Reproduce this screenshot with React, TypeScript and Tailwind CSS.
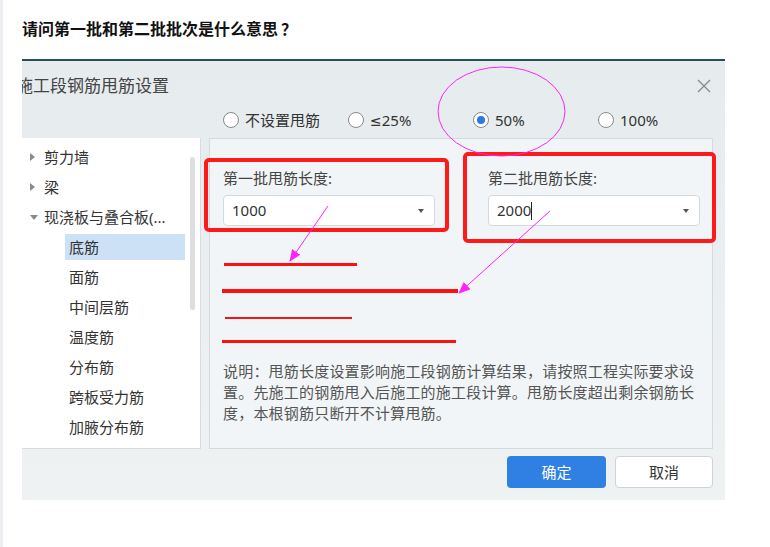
import React from 'react';

type TreeRow = { label: string; level: 0 | 1; arrow?: 'right' | 'down'; selected?: boolean };

const tree: TreeRow[] = [
  { label: '剪力墙', level: 0, arrow: 'right' },
  { label: '梁', level: 0, arrow: 'right' },
  { label: '现浇板与叠合板(...', level: 0, arrow: 'down' },
  { label: '底筋', level: 1, selected: true },
  { label: '面筋', level: 1 },
  { label: '中间层筋', level: 1 },
  { label: '温度筋', level: 1 },
  { label: '分布筋', level: 1 },
  { label: '跨板受力筋', level: 1 },
  { label: '加腋分布筋', level: 1 },
];

const radios = [
  { label: '不设置甩筋', checked: false },
  { label: '≤25%', checked: false },
  { label: '50%', checked: true },
  { label: '100%', checked: false },
];

const Radio: React.FC<{ label: string; checked: boolean }> = ({ label, checked }) => (
  <div className="w-[125px] flex items-center gap-[6px]">
    <span className="w-[16px] h-[16px] rounded-full bg-white border border-[#8a8a8a] flex items-center justify-center shrink-0">
      {checked && <span className="w-[8px] h-[8px] rounded-full bg-[#2a78e0]" />}
    </span>
    <span className="text-[15px] leading-[18px] text-[#333]">
      {label.startsWith('≤') ? (
        <>
          <span className="font-['DejaVu_Sans',sans-serif] text-[14px]">≤</span>
          {label.slice(1)}
        </>
      ) : (
        label
      )}
    </span>
  </div>
);

const Select: React.FC<{ value: string; cursor?: boolean }> = ({ value, cursor }) => (
  <div className="mt-[7px] h-[31px] bg-white border border-[#d6d9dc] rounded-[4px] flex items-center pl-[8px] pr-[10px]">
    <span className="text-[15px] text-[#333] leading-none">{value}</span>
    {cursor && <span className="w-[1px] h-[18px] bg-[#222]" />}
    <span className="ml-auto w-0 h-0 border-l-[3px] border-r-[3px] border-t-[4px] border-l-transparent border-r-transparent border-t-[#555]" />
  </div>
);

export default function App() {
  return (
    <div className="relative w-[770px] h-[547px] flex bg-white font-['Noto_Sans','Noto_Sans_CJK_SC',sans-serif]">
      <div className="w-[3px] bg-[#eceef1]" />
      <div className="flex-1">
        <div className="h-[59px] pl-[19px] pt-[17px]">
          <h1 className="text-[16px] leading-[22px] font-bold text-[#111] font-['Noto_Sans_CJK_SC',sans-serif]">
            请问第一批和第二批批次是什么意思<span className="ml-[3px]">？</span>
          </h1>
        </div>

        <div className="ml-[19px] w-[703px] h-[441px] overflow-hidden border-t-2 border-[#24505a] bg-gradient-to-b from-[#e6ebee] to-[#eef2f3]">
          {/* dialog title */}
          <div className="h-[50px] flex items-center pr-[14px]">
            <span className="-ml-[6px] text-[17px] text-[#444] whitespace-nowrap">施工段钢筋甩筋设置</span>
            <svg className="ml-auto" width="14" height="14" viewBox="0 0 14 14">
              <path d="M1 1 L13 13 M13 1 L1 13" stroke="#8a8a8a" strokeWidth="1.4" fill="none" />
            </svg>
          </div>

          {/* radio row */}
          <div className="h-[18px] pl-[201px] flex items-center">
            {radios.map(r => (
              <Radio key={r.label} label={r.label} checked={r.checked} />
            ))}
          </div>

          {/* panels */}
          <div className="mt-[9px] h-[311px] flex">
            <div className="w-[179px] bg-white border-r border-b border-[#d8dcdf] flex">
              <div className="w-[165px] pt-[4px]">
                {tree.map(row => (
                  <div key={row.label} className="h-[30px] flex items-center">
                    {row.level === 0 ? (
                      <div className="flex items-center">
                        <span className="w-[22px] pl-[8px] flex items-center">
                          {row.arrow === 'right' ? (
                            <span className="w-0 h-0 border-t-[4px] border-b-[4px] border-l-[5px] border-t-transparent border-b-transparent border-l-[#8a8a8a]" />
                          ) : (
                            <span className="w-0 h-0 border-l-[4px] border-r-[4px] border-t-[5px] border-l-transparent border-r-transparent border-t-[#8a8a8a]" />
                          )}
                        </span>
                        <span className="text-[15px] text-[#333] whitespace-nowrap">{row.label}</span>
                      </div>
                    ) : (
                      <div
                        className={`ml-[43px] w-[120px] h-[26px] flex items-center pl-[4px] text-[15px] text-[#333] ${
                          row.selected ? 'bg-[#cce0f6]' : ''
                        }`}
                      >
                        {row.label}
                      </div>
                    )}
                  </div>
                ))}
              </div>
              <div className="ml-[3px] mt-[19px] w-[5px] h-[153px] rounded-full bg-[#dcdee0]" />
            </div>

            <div className="ml-[8px] w-[504px] bg-[#f2f5f7] border border-[#d5dadd] pl-[13px]">
              <div className="pt-[29px] flex gap-[53px]">
                <div className="w-[212px]">
                  <div className="h-[20px] text-[15px] leading-[20px] text-[#444]">第一批甩筋长度:</div>
                  <Select value="1000" />
                </div>
                <div className="w-[212px]">
                  <div className="h-[20px] text-[15px] leading-[20px] text-[#444]">第二批甩筋长度:</div>
                  <Select value="2000" cursor />
                </div>
              </div>

              {/* hand-drawn red lines */}
              <div className="mt-[37px] ml-[1px] w-[133px] h-[3px] bg-[#ff1010]" />
              <div className="mt-[23px] -ml-[1px] w-[236px] h-[4px] bg-[#ff1010]" />
              <div className="mt-[24px] ml-[2px] w-[127px] h-[2px] bg-[#ff1010]" />
              <div className="mt-[21px] -ml-[1px] w-[234px] h-[3px] bg-[#ff1010]" />

              <p className="mt-[17px] text-[15px] leading-[21px] tracking-[0.2px] text-[#555] whitespace-nowrap font-['Noto_Sans_CJK_SC',sans-serif]">
                说明：甩筋长度设置影响施工段钢筋计算结果，请按照工程实际要求设
                <br />
                置。先施工的钢筋甩入后施工的施工段计算。甩筋长度超出剩余钢筋长
                <br />
                度，本根钢筋只断开不计算甩筋。
              </p>
            </div>
          </div>

          {/* buttons */}
          <div className="mt-[7px] h-[32px] flex justify-end gap-[9px] pr-[12px]">
            <button className="w-[99px] h-[32px] rounded-[4px] bg-[#2f80e2] text-white text-[15px]">确定</button>
            <button className="w-[98px] h-[32px] rounded-[4px] bg-white border border-[#cfd3d6] text-[#333] text-[15px]">取消</button>
          </div>
        </div>
      </div>

      {/* annotations drawn over the screenshot */}
      <svg className="absolute top-0 left-0 pointer-events-none" width="770" height="547" viewBox="0 0 770 547">
        <defs>
          <marker id="ah" markerWidth="12" markerHeight="10" refX="11" refY="5" orient="auto" markerUnits="userSpaceOnUse">
            <path d="M0 0 L12 5 L0 10 Z" fill="#ff22ff" />
          </marker>
        </defs>
        <rect x="206" y="160" width="241" height="70" rx="3" fill="none" stroke="#ff1a1a" strokeWidth="4" />
        <rect x="465" y="154" width="249" height="87" rx="3" fill="none" stroke="#ff1a1a" strokeWidth="4" />
        <ellipse cx="501.5" cy="111.5" rx="63.5" ry="44.5" fill="none" stroke="#ff22ff" strokeWidth="1" />
        <line x1="328" y1="206" x2="290" y2="261" stroke="#ff22ff" strokeWidth="1" markerEnd="url(#ah)" />
        <line x1="550" y1="211" x2="459" y2="293" stroke="#ff22ff" strokeWidth="1" markerEnd="url(#ah)" />
      </svg>
    </div>
  );
}
